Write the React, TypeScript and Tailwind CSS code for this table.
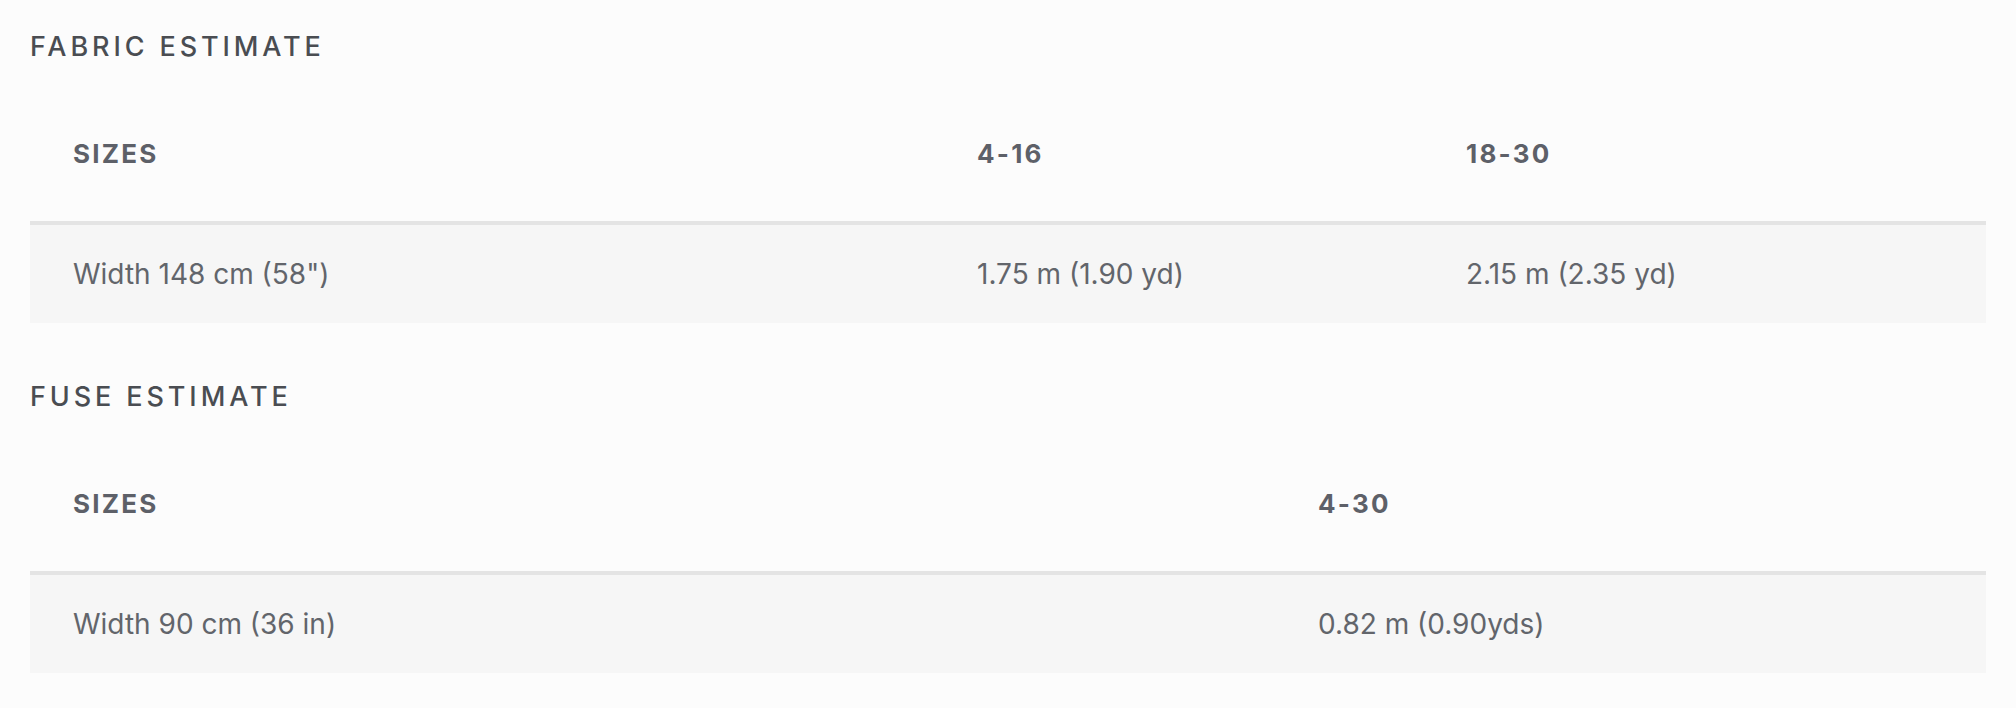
import React from "react";

type Section = {
  title: string;
  cols: string[];
  widths: string[];
  rows: string[][];
};

const sections: Section[] = [
  {
    title: "Fabric Estimate",
    cols: ["Sizes", "4-16", "18-30"],
    widths: ["w-[904px]", "w-[489px]", "w-[563px]"],
    rows: [["Width 148 cm (58\")", "1.75 m (1.90 yd)", "2.15 m (2.35 yd)"]],
  },
  {
    title: "Fuse Estimate",
    cols: ["Sizes", "4-30"],
    widths: ["w-[1245px]", "w-[711px]"],
    rows: [["Width 90 cm (36 in)", "0.82 m (0.90yds)"]],
  },
];

export default function App() {
  return (
    <div className="min-h-screen w-full bg-[#fcfcfc] px-[30px] font-['Inter',sans-serif]">
      {sections.map((s) => (
        <section key={s.title} className="h-[350px]">
          <h2 className="flex h-[92px] items-center text-[27px] leading-none font-medium uppercase tracking-[3.9px] text-[#4a4d52]">
            {s.title}
          </h2>
          <table className="w-full table-fixed border-separate border-spacing-0">
            <colgroup>
              {s.widths.map((w, i) => (
                <col key={i} className={w} />
              ))}
            </colgroup>
            <thead>
              <tr className="h-[133px]">
                {s.cols.map((c) => (
                  <th
                    key={c}
                    className="border-b-4 border-[#e4e4e4] pl-[43px] pb-[6px] text-left align-middle text-[26px] leading-none font-bold uppercase tracking-[2.2px] text-[#5d6068]"
                  >
                    {c}
                  </th>
                ))}
              </tr>
            </thead>
            <tbody>
              {s.rows.map((r, ri) => (
                <tr key={ri} className="h-[98px] bg-[#f6f6f6]">
                  {r.map((v, i) => (
                    <td
                      key={i}
                      className="pl-[43px] text-left align-middle text-[28px] leading-none font-normal text-[#62656b]"
                    >
                      {v}
                    </td>
                  ))}
                </tr>
              ))}
            </tbody>
          </table>
        </section>
      ))}
    </div>
  );
}
